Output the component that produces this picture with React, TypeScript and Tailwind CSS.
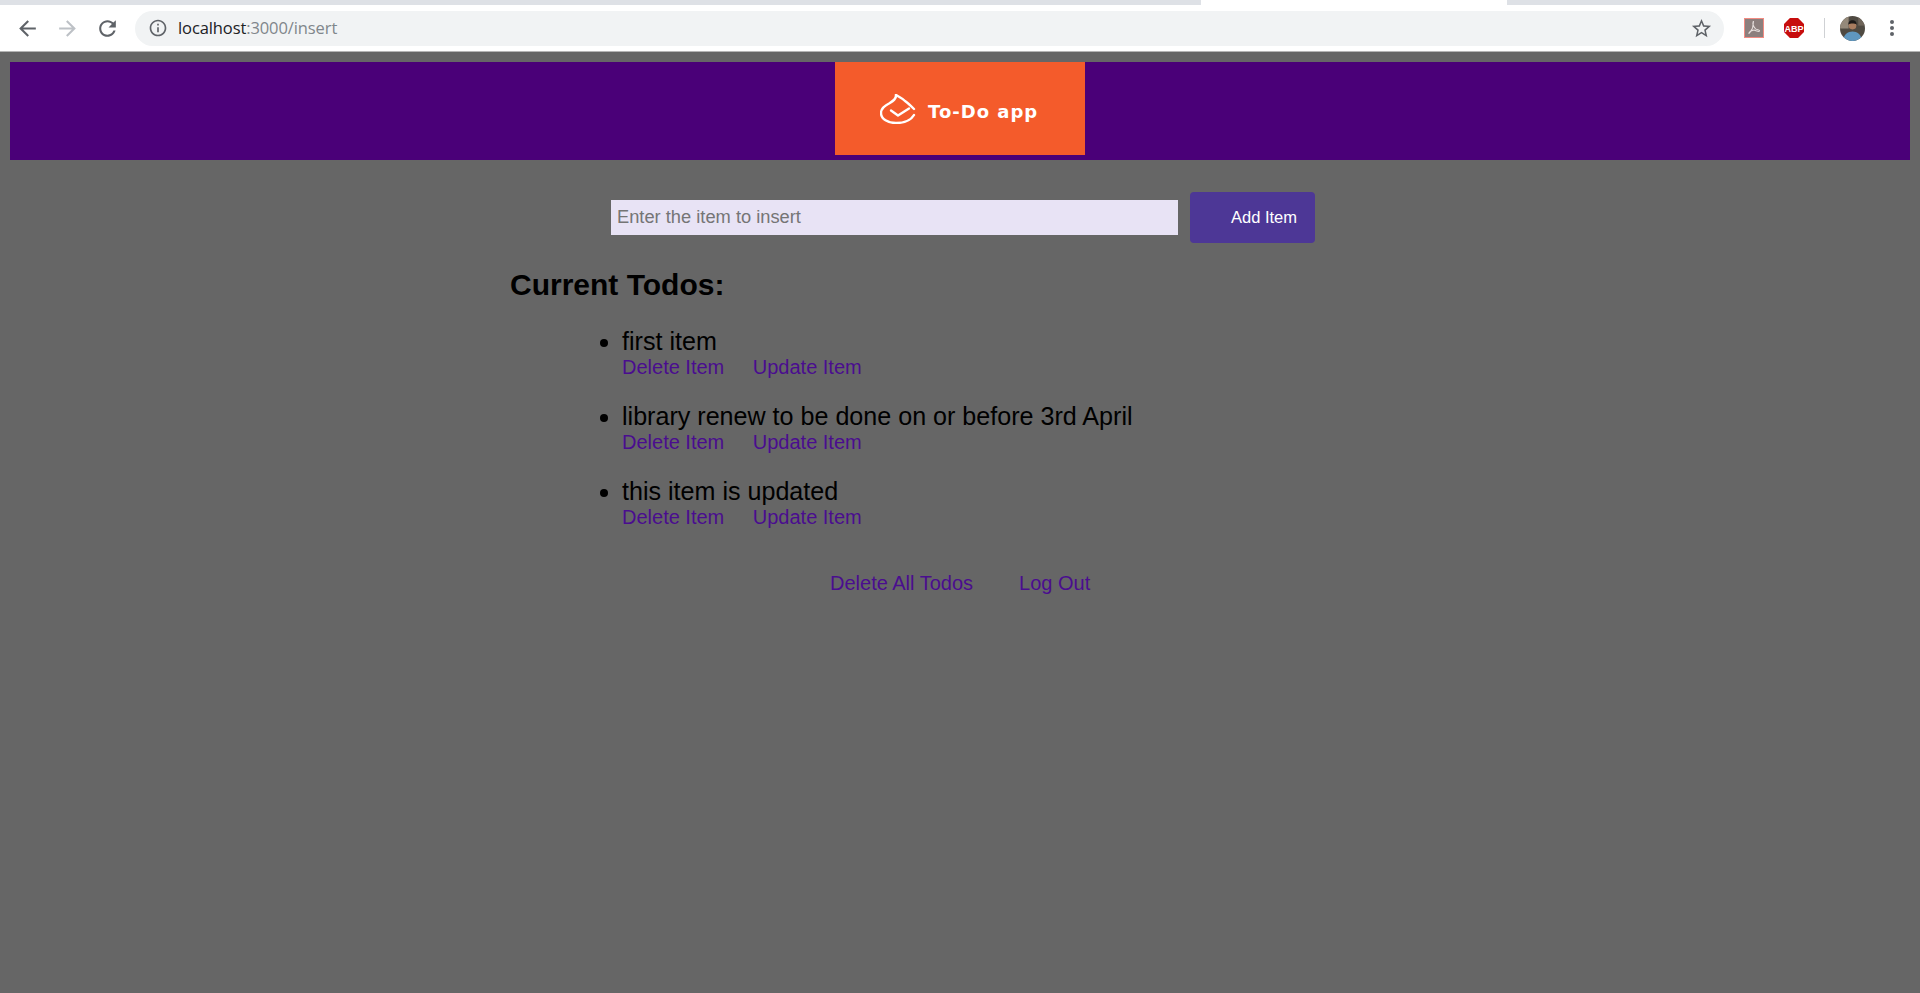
const todos = ["first item", "library renew to be done on or before 3rd April", "this item is updated"];

function BrowserBar() {
  return (
    <div className="h-[52px] bg-white border-b border-[#b5b5b5] font-['Open_Sans',sans-serif]">
      <div className="h-[5px] flex bg-[#dee1e6]">
        <div className="ml-[1201px] w-[306px] bg-white" />
      </div>
      <div className="h-[46px] flex items-center">
        <div className="w-[135px] flex items-center shrink-0 pl-[15px] gap-[15px] text-[#5f6368]">
          <svg viewBox="0 0 24 24" className="w-[25px] h-[25px]" fill="currentColor">
            <path d="M20 11H7.830l5.590-5.590L12 4l-8 8 8 8 1.410-1.410L7.830 13H20v-2z" />
          </svg>
          <svg viewBox="0 0 24 24" className="w-[25px] h-[25px] text-[#bdc1c6]" fill="currentColor">
            <path d="M12 4l-1.410 1.410L16.170 11H4v2h12.170l-5.580 5.590L12 20l8-8z" />
          </svg>
          <svg viewBox="0 0 24 24" className="w-[25px] h-[25px]" fill="currentColor">
            <path d="M17.650 6.350C16.200 4.900 14.210 4 12 4c-4.420 0-7.990 3.580-7.990 8s3.570 8 7.990 8c3.730 0 6.840-2.550 7.730-6h-2.080c-.82 2.330-3.040 4-5.650 4-3.310 0-6-2.690-6-6s2.690-6 6-6c1.660 0 3.140.69 4.220 1.780L13 11h7V4l-2.350 2.350z" />
          </svg>
        </div>
        <div className="w-[1589px] h-[35px] rounded-full bg-[#f1f3f4] flex items-center shrink-0 text-[#5f6368]">
          <svg viewBox="0 0 24 24" className="ml-[13px] w-[20px] h-[20px]" fill="currentColor">
            <path d="M11 7h2v2h-2zm0 4h2v6h-2zm1-9C6.480 2 2 6.480 2 12s4.480 10 10 10 10-4.480 10-10S17.520 2 12 2zm0 18c-4.410 0-8-3.590-8-8s3.590-8 8-8 8 3.590 8 8-3.590 8-8 8z" />
          </svg>
          <div className="ml-[10px] text-[16.500px] text-[#80868b] tracking-[-0.1px]">
            <span className="text-[#202124]">localhost</span>:3000/insert
          </div>
          <svg viewBox="0 0 24 24" className="ml-auto mr-[11px] w-[23px] h-[23px]" fill="currentColor">
            <path d="M22 9.240l-7.190-.62L12 2 9.190 8.630 2 9.240l5.460 4.730L5.820 21 12 17.270 18.180 21l-1.630-7.030L22 9.240zM12 15.400l-3.760 2.270 1-4.280-3.320-2.880 4.380-.38L12 6.100l1.710 4.010 4.380.38-3.320 2.880 1 4.280L12 15.400z" />
          </svg>
        </div>
        <div className="flex items-center">
          <div className="ml-[20px] w-[20px] h-[20px] bg-[#8c7f7d] border border-[#f28b82] flex items-center justify-center">
            <svg viewBox="0 0 20 20" className="w-[16px] h-[16px]" fill="none" stroke="#e8e0de" strokeWidth="1.300">
              <path d="M9 2c-1 3 1 7 3 9 2 1.500 5 1 5 2.500s-4 .5-7-1c-2 .3-5 1.500-6 4-1 1 0-1.500 2-3 2-2 3-6 3-9 0-2 1-3 0-2.500z" />
            </svg>
          </div>
          <svg viewBox="0 0 22 22" className="ml-[20px] w-[20px] h-[20px]">
            <polygon points="6.500,0 15.500,0 22,6.500 22,15.500 15.500,22 6.500,22 0,15.500 0,6.500" fill="#c70d0d" />
            <text x="11" y="15" textAnchor="middle" fontSize="10" fontWeight="700" fill="#fff" fontFamily="Liberation Sans, sans-serif">ABP</text>
          </svg>
          <div className="ml-[20px] w-px h-[20px] bg-[#cfd1d4]" />
          <svg viewBox="0 0 26 26" className="ml-[15px] w-[25px] h-[25px] rounded-full">
            <rect width="26" height="26" fill="#4f4a42" />
            <rect width="9" height="13" fill="#94897a" />
            <rect x="19" width="7" height="10" fill="#6f655a" />
            <path d="M3 26c1-7 5-10 10-10s9 3 10 10z" fill="#5f97c0" />
            <circle cx="13" cy="10" r="4" fill="#a87c5f" />
            <path d="M8.700 9c0-3.500 2-4.500 4.300-4.500s4.300 1 4.300 4.500c-2-1.500-6.600-1.500-8.600 0z" fill="#1d1a18" />
          </svg>
          <div className="ml-[25px] flex flex-col gap-[2px]">
            <span className="w-[4px] h-[4px] rounded-full bg-[#5f6368]" />
            <span className="w-[4px] h-[4px] rounded-full bg-[#5f6368]" />
            <span className="w-[4px] h-[4px] rounded-full bg-[#5f6368]" />
          </div>
        </div>
      </div>
    </div>
  );
}

function Logo() {
  return (
    <div className="w-[250px] h-[93px] bg-[#f45b2b] flex items-center pl-[45px] gap-[12px]">
      <svg viewBox="0 0 36 30" className="w-[36px] h-[30px]" fill="none" stroke="#fff" strokeWidth="2.400" strokeLinecap="round" strokeLinejoin="round">
        {/* drop outline, open on the right where the tick sits */}
        <path d="M16 1c.5 4-3 6-7 8.500C4 12 1 15 1 19c0 6 7 10 15 10 8 0 15-3 18-8" />
        <path d="M16 1c3 2 6 3 9 6 3 2 6 5 9 8" />
        <path d="M11 16.500l7 5 11-7" />
      </svg>
      <span className="mt-[5px] text-[18px] font-bold text-white font-['DejaVu_Sans',sans-serif] tracking-[1px]">To-Do app</span>
    </div>
  );
}

export default function App() {
  return (
    <div className="min-h-[993px] bg-[#666666] font-['Liberation_Sans',sans-serif]">
      <BrowserBar />
      <div className="px-[10px] pt-[10px]">
        <div className="h-[98px] bg-[#4a0078] flex justify-center">
          <Logo />
        </div>
        <div className="mt-[32px] flex items-center pl-[601px]">
          <div className="w-[567px] h-[35px] bg-[#e8e3f5] flex items-center pl-[6px] pb-[2px] text-[18.300px] text-[#757575]">
            Enter the item to insert
          </div>
          <div className="ml-[12px] w-[125px] h-[51px] rounded-[4px] bg-[#4d3796] flex items-center pl-[41px] text-[16.500px] text-white">
            Add Item
          </div>
        </div>
        <h2 className="mt-[25px] ml-[500px] text-[30px] leading-[34px] font-bold text-black">Current Todos:</h2>
        <ul className="mt-[25px] ml-[612px] list-disc text-[25.100px] text-black">
          {todos.map((t) => (
            <li key={t} className="mb-[23px] leading-[29px]">
              {t}
              <div className="flex gap-[28.500px] text-[20px] leading-[23px] text-[#4a0d8f]">
                <span>Delete Item</span>
                <span>Update Item</span>
              </div>
            </li>
          ))}
        </ul>
        <div className="mt-[43px] ml-[820px] flex gap-[46px] text-[20px] leading-[23px] text-[#4a0d8f]">
          <span>Delete All Todos</span>
          <span>Log Out</span>
        </div>
      </div>
    </div>
  );
}
